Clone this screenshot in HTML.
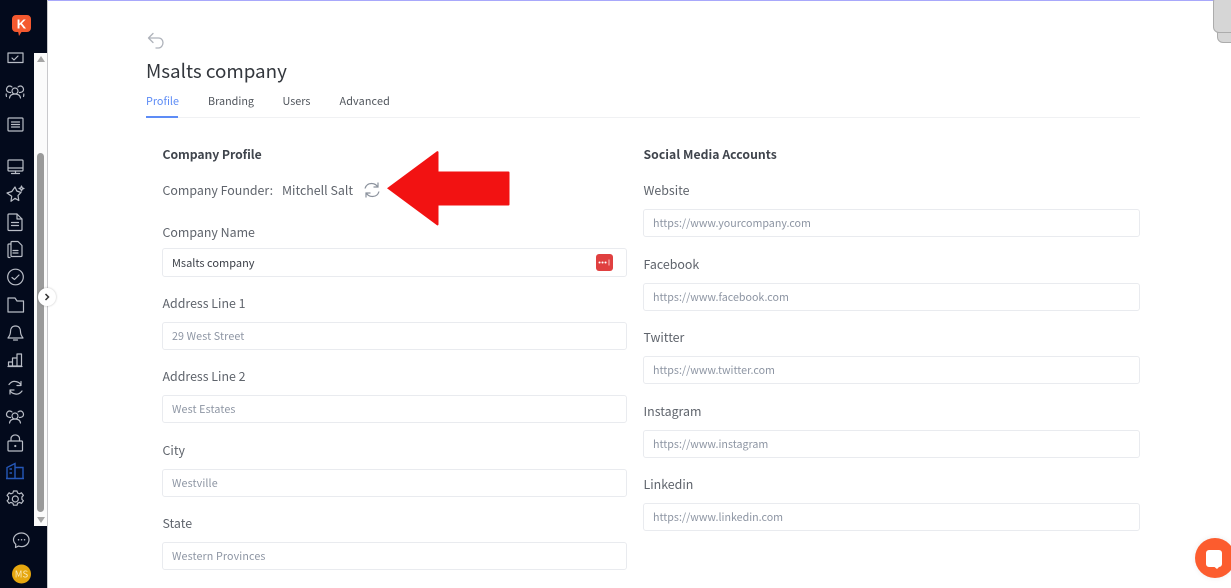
<!DOCTYPE html>
<html><head><meta charset="utf-8">
<style>
html,body{margin:0;padding:0;width:1231px;height:588px;overflow:hidden;background:#fff}
body{font-family:"Noto Sans CJK SC","Liberation Sans",sans-serif;color:#5c626b}
#w{position:absolute;left:0;top:0;width:1231px;height:588px;overflow:hidden;background:#fff;filter:blur(.3px)}
.t{position:absolute;white-space:nowrap;line-height:18px}
.l{font-size:12.400px;color:#5f646c}
.b{position:absolute;box-sizing:border-box;border:1px solid #e9ebef;border-radius:3px;height:28px}
.p{position:absolute;white-space:nowrap;font-size:10.700px;line-height:16px;color:#8d95a3;margin-top:1px}
.q{letter-spacing:.13px}
.h{font-size:12.200px;font-weight:700;color:#3f444c}
.tab{font-size:10.800px;color:#50555c;top:91.500px}
svg{position:absolute;overflow:visible}
.ic path,.ic circle,.ic rect{fill:none;stroke:#b9bdc6;stroke-width:1.200;stroke-linejoin:round;stroke-linecap:round}
</style></head><body><div id="w">
<div style="position:absolute;left:48px;top:0;width:1166px;height:1px;background:#a8a8fb"></div>
<div style="position:absolute;left:0;top:0;width:47px;height:588px;background:#030a1c"></div>
<div style="position:absolute;left:47px;top:0;width:1px;height:588px;background:#c9c9cc"></div>
<div style="position:absolute;left:34px;top:53px;width:13px;height:473px;background:#fbfbfb"></div>
<div style="position:absolute;left:37px;top:153px;width:7px;height:359px;background:#9a9a9a;border-radius:4px"></div>
<div style="position:absolute;left:37px;top:56px;border:4px solid transparent;border-bottom:6px solid #a5a5a5;border-top:0"></div>
<div style="position:absolute;left:37px;top:517px;border:4px solid transparent;border-top:6px solid #a5a5a5;border-bottom:0"></div>

<svg style="left:0;top:0" width="47" height="588">
<path d="M16 15h11a4 4 0 0 1 4 4v9a4 4 0 0 1-4 4h-5.500l-2.500 4-.8-4H16a4 4 0 0 1-4-4v-9a4 4 0 0 1 4-4z" fill="#f4592f"/>
<text x="21.500" y="28.500" font-size="13" font-weight="700" fill="#fff" text-anchor="middle" font-family="Liberation Sans">K</text>
<g class="ic">
<path d="M8 53h15v9.500H8z"/><path d="M12 58l2 2 4-4"/>
<circle cx="15" cy="91" r="3"/><path d="M9.500 98c.5-3.500 3-4 5.500-4s5 .5 5.500 4"/><path d="M10.500 92.500c-2 0-4-1-4-3s1.500-3.500 3-3.500c1 0 2 .5 2.500 1M19.500 92.500c2 0 4-1 4-3s-1.500-3.500-3-3.500c-1 0-2 .5-2.500 1M6.500 96.500c-.3-.8-.4-1.500-.3-2.500M23.500 96.500c.3-.8.4-1.500.3-2.500"/>
<rect x="8" y="118" width="15" height="13" rx="1"/><path d="M11.500 122h8M11.500 124.500h8M11.500 127h8"/>
<rect x="8" y="160" width="15" height="11" rx="1"/><path d="M8 168h15M15.500 171v2.500M11.500 173.500h8"/>
<path d="M15 187l1.800 4 4.200 1.500-3 3 .8 5-3.800-2.200-4 3 .7-5L7 193l4.800-1.500z"/><path d="M21.500 186l.7 1.800 1.800.7-1.800.7-.7 1.800-.7-1.800-1.800-.7 1.800-.7z"/>
<path d="M9 214h8l5 5v10.500a1 1 0 0 1-1 1H9a1 1 0 0 1-1-1V215a1 1 0 0 1 1-1z"/><path d="M17 214v5h5M11.500 222.500h7M11.500 225.500h7"/>
<path d="M12 241.500h6l4 4v10a1 1 0 0 1-1 1H12a1 1 0 0 1-1-1v-13a1 1 0 0 1 1-1z"/><path d="M11 244H9a1 1 0 0 0-1 1v11.500a1 1 0 0 0 1 1h1M13 250.500h5M13 253h5"/>
<circle cx="15.500" cy="277" r="7.800"/><path d="M12 277.500l2.500 2 4.500-4.500"/>
<path d="M8 298h7l2 3h6.500v11H8z"/>
<path d="M15.500 326c-3.500 0-5 2.500-5 5.500 0 3.500-1.500 5-2.500 6.500h15c-1-1.500-2.500-3-2.500-6.500 0-3-1.500-5.500-5-5.500z"/><path d="M13.500 340h4"/>
<path d="M8.500 366v-4h4v4zM12.500 366v-8h4.500v8zM17 366v-12h4.500v12zM8 366.500h14"/>
<path d="M9 384.500c1.500-2 4-3.500 6.500-3 2.500.300 4.500 1.500 5.500 3.500M21 381.500v4h-4M22 391c-1.500 2-4 3.500-6.500 3-2.500-.3-4.500-1.500-5.500-3.500M10 394v-4h4"/>
<circle cx="15" cy="416" r="3"/><path d="M9.500 423c.5-3.500 3-4 5.500-4s5 .5 5.500 4"/><path d="M10.500 417.500c-2 0-4-1-4-3s1.500-3.500 3-3.500c1 0 2 .5 2.500 1M19.500 417.500c2 0 4-1 4-3s-1.500-3.500-3-3.500c-1 0-2 .5-2.500 1"/>
<rect x="8" y="441" width="14.500" height="10" rx="1"/><path d="M11 441v-2.500a4.200 3.500 0 0 1 8.500 0V441"/><circle cx="15.300" cy="446" r=".5"/>
<circle cx="15.300" cy="499" r="3"/><path d="M13.500 491h3.500l.6 2 2 .8 1.800-1 2 2.600-1.500 1.500v2.400l1.500 1.500-2 2.600-1.800-1-2 .8-.6 2h-3.500l-.6-2-2-.8-1.800 1-2-2.600 1.500-1.500v-2.400l-1.500-1.500 2-2.600 1.800 1 2-.8z"/>
<path d="M21.500 533c4.200 0 7.500 3 7.500 6.800s-3.300 6.800-7.500 6.800c-1 0-2-.2-3-.5l-3 1.400.3-3.200c-1.500-1.300-2.300-2.800-2.300-4.500 0-3.800 3.500-6.800 8-6.800z"/>
</g>
<path d="M18.500 539.800h.1M21.500 539.800h.1M24.500 539.800h.1" stroke="#b9bdc6" stroke-width="1.500" stroke-linecap="round"/>
<path d="M7 478.500v-11l8-4v15.500M15 467.500h8v11M6 478.500h18M9.500 469h2.500M9.500 473h2.500" fill="none" stroke="#2557b8" stroke-width="1.400"/>
<circle cx="21.500" cy="574" r="9.500" fill="#e6a70f"/>
<text x="21.500" y="577.500" font-size="9.500" fill="#fbe9b8" text-anchor="middle">MS</text>
</svg>
<div style="position:absolute;left:38px;top:288px;width:18px;height:18px;border-radius:50%;background:#fff;box-shadow:0 0 2px rgba(0,0,0,.25)"></div>
<svg style="left:38px;top:288px" width="18" height="18"><path d="M7.500 6l3 3-3 3" fill="none" stroke="#333" stroke-width="1.500"/></svg>

<svg style="left:146px;top:31px" width="20" height="20"><path d="M7 2.500L2.500 7l4.500 4.500M2.500 7h10c2.800 0 4.500 2.200 4.500 4.600S15.300 17 12.500 17H10" fill="none" stroke="#aeb2ba" stroke-width="1.300" stroke-linecap="round" stroke-linejoin="round"/></svg>
<div class="t" style="left:146px;top:58px;font-size:18.800px;line-height:26px;color:#33373d">Msalts company</div>
<div class="t tab" style="left:146px;color:#5d8cf6">Profile</div>
<div class="t tab" style="left:208px">Branding</div>
<div class="t tab" style="left:282.500px">Users</div>
<div class="t tab" style="left:339.500px;letter-spacing:.15px">Advanced</div>
<div style="position:absolute;left:146px;top:117px;width:994px;height:1px;background:#f0f1f3"></div>
<div style="position:absolute;left:146px;top:116px;width:32px;height:2px;background:#5d8cf6"></div>

<div class="t h" style="left:162.500px;top:145px;letter-spacing:-.05px">Company Profile</div>
<div class="t l" style="left:162.500px;top:181px">Company Founder:</div>
<div class="t l" style="left:282px;top:181px">Mitchell Salt</div>
<svg style="left:363px;top:181px" width="18" height="18"><path d="M2 7.500C3 4 5.500 2.500 8.500 2.500c2.500 0 4.500 1 6 3M15 1.500V6h-4.500M16 10.500c-1 3.500-3.500 5-6.500 5-2.500 0-4.500-1-6-3M3 16.500V12h4.500" fill="none" stroke="#8a919c" stroke-width="1.200"/></svg>
<svg style="left:386px;top:150px" width="126" height="78"><path d="M1 38.300L51 1.300a1 1 0 0 1 1.500 1V21.500h70a1 1 0 0 1 1 1V54.500a1 1 0 0 1-1 1h-70V74.300a1 1 0 0 1-1.500 1z" fill="#f21212"/></svg>

<div class="t l" style="left:162.500px;top:223px">Company Name</div>
<div class="b" style="left:162px;top:248px;width:465px;height:29px"></div>
<div class="p" style="left:172px;top:255px;margin-top:0;font-size:11px;color:#3c4048">Msalts company</div>
<div style="position:absolute;left:596px;top:254px;width:17px;height:17px;background:#e04040;border-radius:3px"></div>
<svg style="left:596px;top:254px" width="17" height="17"><path d="M3.500 8.500h.1M6.500 8.500h.1M9.500 8.500h.1" stroke="#fff" stroke-width="2" stroke-linecap="round"/><path d="M13 5.500v6" stroke="#f3c4c4" stroke-width="1"/></svg>

<div class="t l" style="left:162.500px;top:294px">Address Line 1</div>
<div class="b" style="left:162px;top:322px;width:465px"></div>
<div class="p q" style="left:172px;top:328px">29 West Street</div>
<div class="t l" style="left:162.500px;top:367px">Address Line 2</div>
<div class="b" style="left:162px;top:395px;width:465px"></div>
<div class="p q" style="left:172px;top:401px">West Estates</div>
<div class="t l" style="left:162.500px;top:441px">City</div>
<div class="b" style="left:162px;top:469px;width:465px"></div>
<div class="p q" style="left:172px;top:475px">Westville</div>
<div class="t l" style="left:162.500px;top:514px">State</div>
<div class="b" style="left:162px;top:542px;width:465px"></div>
<div class="p q" style="left:172px;top:548px">Western Provinces</div>

<div class="t h" style="left:643.500px;top:145px;letter-spacing:.05px">Social Media Accounts</div>
<div class="t l" style="left:643.500px;top:181px">Website</div>
<div class="b" style="left:643px;top:209px;width:497px"></div>
<div class="p" style="left:653px;top:215px">https://www.yourcompany.com</div>
<div class="t l" style="left:643.500px;top:255px">Facebook</div>
<div class="b" style="left:643px;top:283px;width:497px"></div>
<div class="p" style="left:653px;top:289px">https://www.facebook.com</div>
<div class="t l" style="left:643.500px;top:328px">Twitter</div>
<div class="b" style="left:643px;top:356px;width:497px"></div>
<div class="p" style="left:653px;top:362px">https://www.twitter.com</div>
<div class="t l" style="left:643.500px;top:402px">Instagram</div>
<div class="b" style="left:643px;top:430px;width:497px"></div>
<div class="p" style="left:653px;top:436px">https://www.instagram</div>
<div class="t l" style="left:643.500px;top:475px">Linkedin</div>
<div class="b" style="left:643px;top:503px;width:497px"></div>
<div class="p" style="left:653px;top:509px">https://www.linkedin.com</div>

<div style="position:absolute;left:1213px;top:-4px;width:30px;height:37px;box-sizing:border-box;background:#d6d6d6;border:1.500px solid #acacac;border-radius:6px"></div>
<div style="position:absolute;left:1217px;top:32px;width:30px;height:11px;box-sizing:border-box;background:#d6d6d6;border:1.500px solid #acacac;border-radius:0 0 0 6px"></div>

<div style="position:absolute;left:1195px;top:538px;width:40px;height:40px;border-radius:50%;background:#fc5c2e;box-shadow:0 0 6px rgba(0,0,0,.08)"></div>
<svg style="left:1195px;top:538px" width="36" height="40"><path d="M14 12h10a3 3 0 0 1 3 3v11a3 3 0 0 1-3 3v0l-2 2-2.500-2H14a3 3 0 0 1-3-3V15a3 3 0 0 1 3-3z" fill="#fff"/></svg>
</div></body></html>
